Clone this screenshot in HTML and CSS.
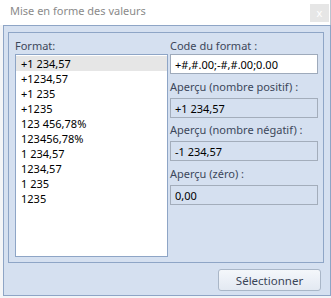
FILE: index.html
```html
<!DOCTYPE html>
<html lang="fr">
<head>
<meta charset="utf-8">
<title>Mise en forme des valeurs</title>
<link rel="stylesheet" href="styles.css">
</head>
<body>
<div class="window">
  <div class="titlebar">
    <span class="title">Mise en forme des valeurs</span>
    <span class="close">x</span>
  </div>
  <div class="dialog">
    <div class="panel">
      <div class="col-left">
        <div class="label first">Format:</div>
        <ul class="list">
          <li class="selected">+1 234,57</li>
          <li>+1234,57</li>
          <li>+1 235</li>
          <li>+1235</li>
          <li>123 456,78%</li>
          <li>123456,78%</li>
          <li>1 234,57</li>
          <li>1234,57</li>
          <li>1 235</li>
          <li>1235</li>
        </ul>
      </div>
      <div class="col-right">
        <div class="label first">Code du format :</div>
        <div class="field input">+#,#.00;-#,#.00;0.00</div>
        <div class="label l2">Aperçu (nombre positif) :</div>
        <div class="field">+1 234,57</div>
        <div class="label l3">Aperçu (nombre négatif) :</div>
        <div class="field">-1 234,57</div>
        <div class="label l4">Aperçu (zéro) :</div>
        <div class="field">0,00</div>
      </div>
    </div>
    <div class="footer">
      <button class="btn">Sélectionner</button>
    </div>
  </div>
</div>
</body>
</html>
```
FILE: styles.css
```css
* { box-sizing: border-box; }
html, body { margin: 0; padding: 0; }
body {
  width: 331px;
  height: 298px;
  background: #f4f5f7;
  font-family: "Noto Sans", "Open Sans", sans-serif;
  font-size: 11px;
  overflow: hidden;
}
.window {
  width: 331px;
  height: 298px;
  display: flex;
  flex-direction: column;
}
.titlebar {
  height: 25px;
  background: #ffffff;
  border-right: 1px solid #b9c3cf;
  display: flex;
  align-items: flex-start;
  justify-content: space-between;
}
.title {
  color: #8a8a8a;
  font-size: 11px;
  line-height: 22px;
  padding-left: 10px;
}
.close {
  width: 19px;
  height: 18px;
  margin-top: 4px;
  margin-right: 1px;
  background: #e6e6e6;
  color: #ffffff;
  font-size: 11px;
  line-height: 17px;
  text-align: center;
}
.dialog {
  margin-left: 3px;
  width: 328px;
  height: 271px;
  background: #d5e0f0;
  border: 1px solid #8ea5c6;
  padding: 6px 6px 0 4px;
  display: flex;
  flex-direction: column;
}
.panel {
  width: 316px;
  height: 231px;
  border: 1px solid #8ea5c6;
  padding: 4px 5px 0 6px;
  display: flex;
  gap: 2px;
}
.col-left { width: 153px; display: flex; flex-direction: column; }
.col-right { width: 148px; display: flex; flex-direction: column; }
.label {
  color: #3c475a;
  display: flex;
  align-items: center;
  height: 24px;
  white-space: nowrap;
}
.label.first { height: 17px; }
.label.l3 { height: 23px; }
.list {
  list-style: none;
  margin: 0;
  padding: 1px 0 0 0;
  height: 203px;
  background: #ffffff;
  border: 1px solid #8ea5c6;
}
.list li {
  height: 15px;
  line-height: 15px;
  padding-left: 5px;
  color: #000000;
  white-space: nowrap;
}
.list li.selected { background: #e6e6e6; }
.field {
  height: 20px;
  border: 1px solid #a3adbb;
  padding-left: 4px;
  display: flex;
  align-items: center;
  color: #000000;
  white-space: nowrap;
}
.field.input {
  background: #ffffff;
  border-color: #9eaabb;
}
.footer {
  display: flex;
  justify-content: flex-end;
  padding-top: 6px;
  padding-right: 3px;
}
.btn {
  width: 103px;
  height: 22px;
  border: 1px solid #a9b6c7;
  border-radius: 3px;
  background: linear-gradient(#f4f7fb, #e3e9f2);
  color: #3a4658;
  font-family: "Noto Sans", "Open Sans", sans-serif;
  font-size: 11.5px;
  padding: 0;
}
```
